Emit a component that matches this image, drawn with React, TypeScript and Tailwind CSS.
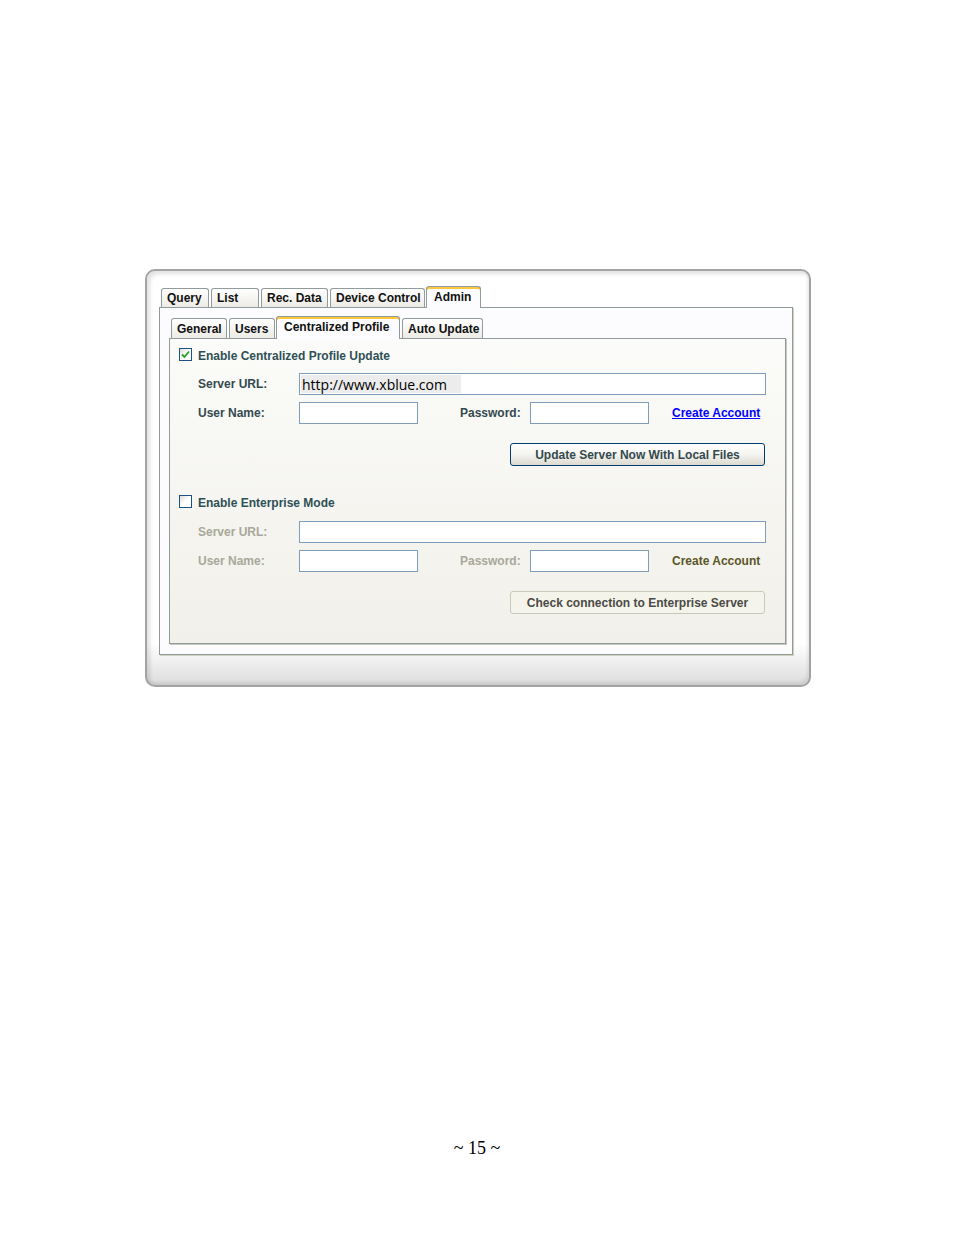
import React from 'react'

const ui = { fontFamily: '"Liberation Sans", Arial, sans-serif' }

function Tab({ label, w, active, h }: { label: string; w: string; active?: boolean; h: 'outer' | 'inner' }) {
  if (active) {
    return (
      <div
        className={`${w} ${h === 'outer' ? 'h-[22px]' : 'h-[23px]'} relative z-10 -mb-px -ml-px flex items-start rounded-t-[3px] border border-b-0 border-[#919b9c] bg-[#fcfcfe] pl-[7px] pt-[1px] text-[12px] font-bold text-[#111] shadow-[inset_0_2px_0_#ffc73c,inset_0_1px_0_#e68b2c]`}
      >
        {label}
      </div>
    )
  }
  return (
    <div
      className={`${w} ${h === 'outer' ? 'h-[19px]' : 'h-[20px]'} flex items-center rounded-t-[3px] border border-b-0 border-[#919b9c] bg-gradient-to-b from-white to-[#ecebe5] pl-[5px] text-[12px] font-bold text-[#111]`}
    >
      {label}
    </div>
  )
}

function Checkbox({ checked }: { checked?: boolean }) {
  return (
    <div className="flex h-[13px] w-[13px] items-center justify-center border border-[#1c5180] bg-gradient-to-br from-[#dcdcd7] via-white to-white">
      {checked && (
        <svg width="9" height="9" viewBox="0 0 9 9">
          <path d="M1 4.5 L3.5 7 L8 1.5" fill="none" stroke="#21a121" strokeWidth="1.8" />
        </svg>
      )}
    </div>
  )
}

function TextBox({ w, value }: { w: string; value?: string }) {
  return (
    <div className={`${w} h-[22px] border border-[#7f9db9] bg-white p-px`}>
      {value && (
        <div className="flex h-full w-[160px] items-center bg-[#ececec] pl-px text-[14px] text-black" style={{ fontFamily: '"Open Sans", sans-serif' }}>
          {value}
        </div>
      )}
    </div>
  )
}

function Section({ enabled }: { enabled: boolean }) {
  const label = enabled ? 'text-[#34494e]' : 'text-[#a9a899]'
  return (
    <>
      <div className="flex h-[22px] items-center pl-[28px]">
        <div className={`w-[101px] text-[12px] font-bold ${label}`}>Server URL:</div>
        <TextBox w="w-[467px]" value={enabled ? 'http://www.xblue.com' : undefined} />
      </div>
      <div className="mt-[7px] flex h-[22px] items-center pl-[28px]">
        <div className={`w-[101px] text-[12px] font-bold ${label}`}>User Name:</div>
        <TextBox w="w-[119px]" />
        <div className={`ml-[42px] w-[70px] text-[12px] font-bold ${label}`}>Password:</div>
        <TextBox w="w-[119px]" />
        {enabled ? (
          <a className="ml-[23px] text-[12px] font-bold text-[#0000ff] underline">Create Account</a>
        ) : (
          <span className="ml-[23px] text-[12px] font-bold text-[#5b5629]">Create Account</span>
        )}
      </div>
    </>
  )
}

export default function App() {
  return (
    <div className="relative h-[1235px] w-[954px] overflow-hidden bg-white" style={ui}>
      <div className="ml-[145px] mt-[269px] h-[418px] w-[666px] rounded-[10px] border-2 border-[#a3a3a3] bg-gradient-to-b from-white via-white via-90% to-[#dcdcdc] pl-[12px] pt-[15px] shadow-[inset_3px_3px_4px_rgba(0,0,0,0.12),inset_-2px_-3px_3px_rgba(0,0,0,0.08)]">
        <div className="flex h-[21px] items-end gap-[2px] pl-[2px]">
          <Tab h="outer" label="Query" w="w-[48px]" />
          <Tab h="outer" label="List" w="w-[48px]" />
          <Tab h="outer" label="Rec. Data" w="w-[67px]" />
          <Tab h="outer" label="Device Control" w="w-[95px]" />
          <Tab h="outer" label="Admin" w="w-[55px]" active />
        </div>
        <div className="h-[348px] w-[634px] border border-[#919b9c] bg-[#fcfcfe] pl-[9px] pt-[8px] shadow-[1px_1px_0_#d0d0bf]">
          <div className="flex h-[22px] items-end gap-[2px] pl-[2px]">
            <Tab h="inner" label="General" w="w-[56px]" />
            <Tab h="inner" label="Users" w="w-[46px]" />
            <Tab h="inner" label="Centralized Profile" w="w-[124px]" active />
            <Tab h="inner" label="Auto Update" w="w-[81px]" />
          </div>
          <div className="h-[306px] w-[617px] border border-[#919b9c] bg-gradient-to-b from-[#fbfbf9] to-[#f1f0ea] pt-[9px] shadow-[1px_1px_0_#c9c7ba]">
            <div className="flex h-[13px] items-center gap-[6px] pl-[9px]">
              <Checkbox checked />
              <span className="pt-[3px] text-[12px] leading-[13px] font-bold text-[#2f5055]">Enable Centralized Profile Update</span>
            </div>
            <div className="mt-[12px]">
              <Section enabled />
            </div>
            <div className="ml-[340px] mt-[19px] flex h-[23px] w-[255px] items-center justify-center rounded-[3px] border border-[#003c74] bg-gradient-to-b from-white via-[#f4f4f0] to-[#dcdad0] text-[12px] font-bold text-[#34494e]">
              Update Server Now With Local Files
            </div>
            <div className="mt-[29px] flex h-[13px] items-center gap-[6px] pl-[9px]">
              <Checkbox />
              <span className="pt-[3px] text-[12px] leading-[13px] font-bold text-[#2f5055]">Enable Enterprise Mode</span>
            </div>
            <div className="mt-[13px]">
              <Section enabled={false} />
            </div>
            <div className="ml-[340px] mt-[19px] flex h-[23px] w-[255px] items-center justify-center rounded-[3px] border border-[#cac8bb] bg-[#f5f4ea] text-[12px] font-bold text-[#4a4a48]">
              Check connection to Enterprise Server
            </div>
          </div>
        </div>
      </div>
      <div className="mt-[448px] text-center text-[18px] text-black" style={{ fontFamily: '"Liberation Serif", serif' }}>
        ~ 15 ~
      </div>
    </div>
  )
}
